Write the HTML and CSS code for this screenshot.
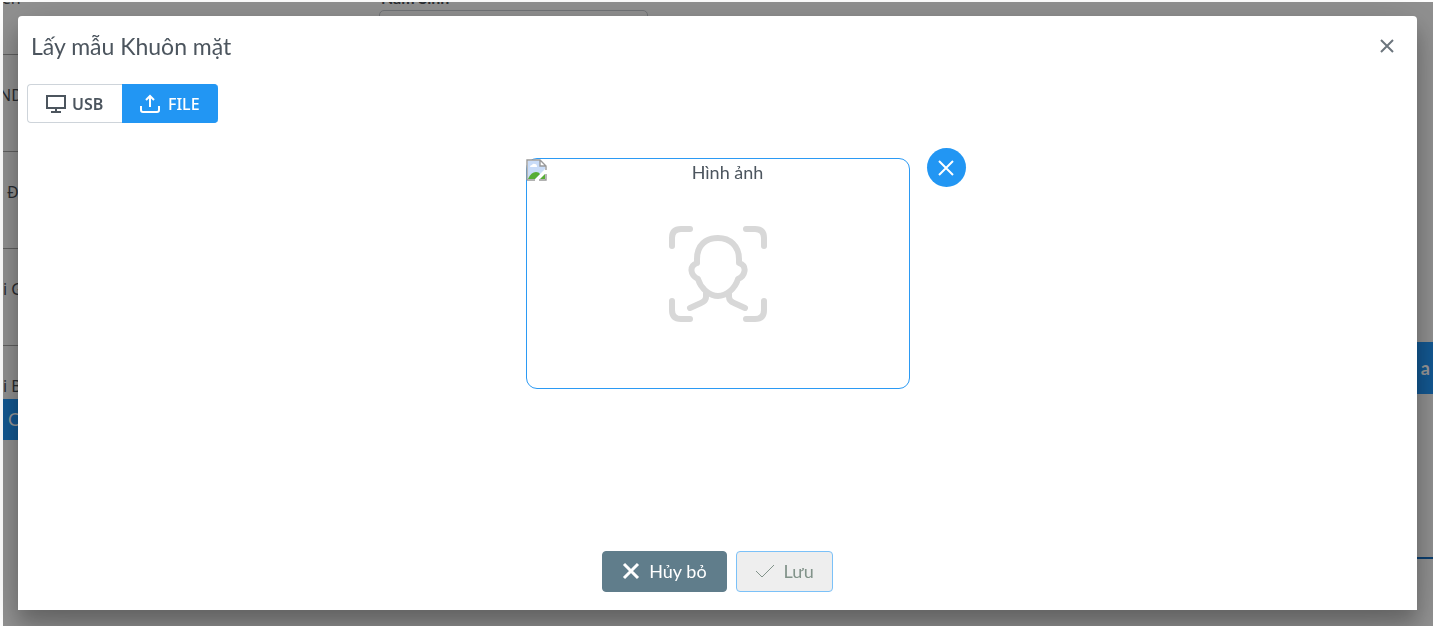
FILE: index.html
```
<!DOCTYPE html>
<html lang="vi">
<head>
<meta charset="utf-8">
<meta name="viewport" content="width=device-width, initial-scale=1">
<title>Lấy mẫu Khuôn mặt</title>
<link rel="stylesheet" href="styles.css">
</head>
<body>
<div class="page">
  <div class="fields">
    <div class="field first">Tên</div>
    <div class="field outdent">ND</div>
    <div class="field indent">Đ</div>
    <div class="field">i G</div>
    <div class="field last">i B</div>
    <div class="bar">C</div>
  </div>
  <div class="year">
    <label for="year">Năm Sinh</label>
    <input id="year" type="text">
  </div>
  <div class="side">
    <div class="side-bar">a</div>
    <div class="side-line"></div>
  </div>
</div>
<section class="dialog" role="dialog" aria-labelledby="title">
  <header class="head">
    <h1 id="title">Lấy mẫu Khuôn mặt</h1>
    <button class="close" type="button" aria-label="Đóng">
      <svg width="16" height="16" viewBox="0 0 16 16"><path d="M2 2l12 12M14 2L2 14"/></svg>
    </button>
  </header>
  <div class="tabs">
    <button class="tab" type="button">
      <svg width="22" height="20" viewBox="0 0 22 20"><path d="M2 2h18v12H2zM11 14v4M6 18h10"/></svg>USB
    </button>
    <button class="tab active" type="button">
      <svg width="20" height="20" viewBox="0 0 20 20"><path d="M1 12v4q0 2 2 2h14q2 0 2-2v-4M10 13V2M6 6l4-4 4 4"/></svg>FILE
    </button>
  </div>
  <div class="content">
    <div class="preview">
      <svg class="broken" width="22" height="22" viewBox="0 0 22 22">
        <path d="M1 1h13l6 6v14H1z" fill="#fff"/>
        <path d="M2 2h12v5h5v3L9 20H2z" fill="#c9dcf8"/>
        <path d="M4 8q0-2 2-2 1-2 3-1 2 0 2 3z" fill="#fff"/>
        <path d="M2 20q3-7 8-7 3 0 4 2l-5 5H2z" fill="#57ad35"/>
        <path d="M14 20l5-5v5z" fill="#57ad35"/>
        <path d="M1 21V1h13l6 6v4M14 1v6h6M1 21h8M13 21h7v-6" fill="none" stroke="#999" stroke-width="1.4"/>
      </svg>
      <span class="caption">Hình ảnh</span>
      <svg class="face" width="100" height="98" viewBox="0 0 100 98">
        <path d="M4 21V13q0-9 9-9h9M78 4h9q9 0 9 9v8M4 76v9q0 9 9 9h9M78 94h9q9 0 9-9v-9"/>
        <path d="M29 38V34C29 20 38 13 50 13S71 21 71 34v4C80 41 77 51 70 54C67 64 58 71 50 71S33 64 30 54C22 50 21 41 29 38M38 68v4q0 4-5 6L22 83M61 68v4q0 4 5 6l11 5"/>
      </svg>
    </div>
    <button class="remove" type="button" aria-label="Xóa hình ảnh">
      <svg width="18" height="18" viewBox="0 0 18 18"><path d="M2 2l14 14M16 2L2 16"/></svg>
    </button>
  </div>
  <footer class="actions">
    <button class="btn cancel" type="button">
      <svg width="18" height="18" viewBox="0 0 18 18"><path d="M2 2l14 14M16 2L2 16"/></svg>Hủy bỏ
    </button>
    <button class="btn save" type="button" disabled>
      <svg width="20" height="18" viewBox="0 0 20 18"><path d="M1 9l6 6L19 3"/></svg>Lưu
    </button>
  </footer>
</section>
</body>
</html>
```
FILE: styles.css
```
* { box-sizing: border-box; }
body {
  margin: 0;
  min-height: 100vh;
  padding: 2px 0 0 3px;
  background: #fff;
  color: #4c555e;
  font-family: Lato, "Noto Sans", sans-serif;
  font-size: 18px;
}
button, input { font: inherit; }
button { cursor: pointer; }
svg { fill: none; stroke: currentColor; stroke-width: 2; flex: none; }

.page {
  display: grid;
  grid-template-columns: 376px 269px 1fr;
  height: calc(100vh - 2px);
  overflow: hidden;
  background: #919191;
  color: #292c30;
}
.field {
  height: 97px;
  padding-top: 28px;
  border-bottom: 1px solid #606060;
  font-family: "Noto Sans", sans-serif;
  font-size: 16px;
  line-height: 24px;
}
.field.first { height: 53px; padding: 0; line-height: 0; text-indent: -9px; margin-top: -4px; padding-bottom: 4px; height: 57px; }
.field.outdent { text-indent: -4px; }
.field.indent { padding-left: 4px; }
.field.last { height: 53px; border: 0; }
.bar { height: 41px; padding-left: 5px; background: #135892; color: #999; line-height: 41px; }
.year { display: flex; flex-direction: column; }
.year label { height: 12px; margin: -4px 0 0 2px; line-height: 0; font-weight: 700; font-size: 16px; }
.year input { height: 40px; border: 1px solid #737578; border-radius: 5px; background: transparent; }
.side { padding-top: 340px; text-align: right; }
.side-bar { height: 52px; padding-right: 3px; background: #135892; color: #999; font-weight: 700; line-height: 52px; }
.side-line { height: 165px; border-bottom: 2px solid #0b3f70; }

.dialog {
  position: fixed;
  inset: 16px 16px 16px 18px;
  display: flex;
  flex-direction: column;
  border-radius: 4px 4px 0 0;
  background: #fff;
  box-shadow: 0 14px 20px rgba(0, 0, 0, .24), 0 8px 50px rgba(0, 0, 0, .16);
}
.head { display: flex; align-items: center; justify-content: space-between; height: 60px; padding: 0 22px 0 13px; }
h1 { margin: 0; font-size: 23px; font-weight: 400; line-height: 32px; }
.close { display: flex; padding: 0; border: 0; background: none; color: #6c757d; }
.tabs { display: flex; margin: 8px 9px 0; }
.tab {
  display: flex;
  align-items: center;
  gap: 5px;
  width: 95px;
  height: 39px;
  padding: 0 0 0 17px;
  border: 1px solid #ced4da;
  border-right: 0;
  border-radius: 4px 0 0 4px;
  background: #fff;
  color: #4c555e;
  font-family: "Noto Sans", sans-serif;
  font-size: 16px;
  font-weight: 600;
}
.tab.active { gap: 8px; width: 96px; border-color: #2296f3; border-radius: 0 4px 4px 0; background: #2296f3; color: #fff; font-weight: 500; }
.content { display: grid; grid-template-columns: 1fr 384px 1fr; align-items: start; gap: 17px; flex: 1; padding-top: 25px; }
.preview {
  position: relative;
  grid-column: 2;
  display: flex;
  flex-direction: column;
  align-items: center;
  height: 231px;
  margin-top: 10px;
  border: 1px solid #2b9af4;
  border-radius: 11px;
}
.broken { position: absolute; left: -1px; top: 0; stroke: none; }
.caption { padding-left: 20px; line-height: 26px; }
.face { margin-top: 40px; color: #d8d8d8; stroke-width: 6; stroke-linecap: round; stroke-linejoin: round; }
.remove {
  display: flex;
  align-items: center;
  justify-content: center;
  width: 39px;
  height: 39px;
  padding: 0;
  border: 0;
  border-radius: 50%;
  background: #2296f3;
  color: #fff;
}
.actions { display: flex; justify-content: center; gap: 9px; padding-bottom: 18px; }
.btn { display: flex; align-items: center; gap: 9px; height: 41px; padding: 0 19px 2px; border: 1px solid #607d8b; border-radius: 4px; }
.cancel { background: #607d8b; color: #fff; }
.cancel svg { stroke-width: 3; }
.save { padding: 0 18px 2px; border-color: #7bc1f8; background: #eee; color: #82938a; }
.save svg { stroke-width: 1; }
```
